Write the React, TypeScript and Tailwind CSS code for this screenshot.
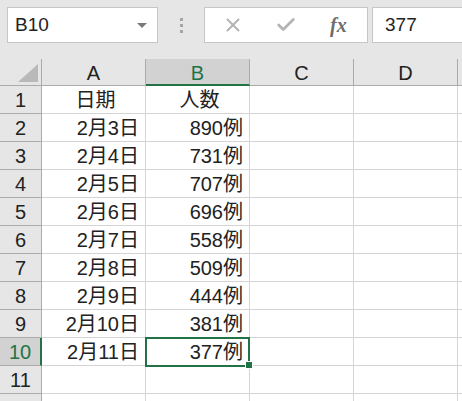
import { Check, X } from "lucide-react";

const rows: [string, string][] = [
  ["日期", "人数"],
  ["2月3日", "890例"],
  ["2月4日", "731例"],
  ["2月5日", "707例"],
  ["2月6日", "696例"],
  ["2月7日", "558例"],
  ["2月8日", "509例"],
  ["2月9日", "444例"],
  ["2月10日", "381例"],
  ["2月11日", "377例"],
  ["", ""],
  ["", ""],
];

const cols = ["A", "B", "C", "D", ""];
const font = { fontFamily: '"Liberation Sans", "Noto Sans CJK JP", sans-serif' };

export default function App() {
  return (
    <div className="h-[401px] w-[462px] overflow-hidden bg-[#e6e6e6] text-[#222]" style={font}>
      {/* formula bar */}
      <div className="flex h-[59px] items-start pt-[7px]">
        <div className="ml-[7px] flex h-[36px] w-[151px] items-center justify-between border border-[#c6c6c6] bg-white pl-[7px] pr-[10px] text-[19px]">
          <span>B10</span>
          <span className="h-0 w-0 border-x-[5px] border-t-[5px] border-x-transparent border-t-[#7a7a7a]" />
        </div>
        <div className="flex h-[36px] w-[46px] flex-col items-center justify-center gap-[3px]">
          <span className="h-[3px] w-[3px] bg-[#a6a6a6]" />
          <span className="h-[3px] w-[3px] bg-[#a6a6a6]" />
          <span className="h-[3px] w-[3px] bg-[#a6a6a6]" />
        </div>
        <div className="flex h-[36px] w-[164px] items-center border border-[#c6c6c6] bg-white">
          <X className="ml-[17px] h-[22px] w-[22px] text-[#b4b4b4]" strokeWidth={2.2} />
          <Check className="ml-[31px] h-[22px] w-[22px] text-[#b4b4b4]" strokeWidth={3} />
          <span
            className="ml-[33px] text-[20px] font-bold italic text-[#6d6d6d]"
            style={{ fontFamily: '"Liberation Serif", serif' }}
          >
            fx
          </span>
        </div>
        <div className="ml-[4px] flex h-[36px] flex-1 items-center border border-r-0 border-[#c6c6c6] bg-white pl-[12px] text-[19px]">
          377
        </div>
      </div>

      {/* sheet */}
      <div className="grid grid-cols-[42px_104px_104px_104px_104px_104px] grid-rows-[27px_repeat(12,28px)]">
        <div className="relative border-r border-b border-[#ababab]">
          <span
            className="absolute right-[3px] bottom-[3px] h-[18px] w-[20px] bg-[#b9b9b9]"
            style={{ clipPath: "polygon(100% 0, 100% 100%, 0 100%)" }}
          />
        </div>
        {cols.map((c, i) => (
          <div
            key={i}
            className={
              c === "B"
                ? "flex items-center justify-center border-r border-b-2 border-r-[#ababab] border-b-[#217346] bg-[#d2d2d2] pt-[2px] text-[20px] text-[#217346]"
                : "flex items-center justify-center border-r border-b border-[#ababab] pt-[1px] text-[20px]"
            }
          >
            {c}
          </div>
        ))}

        {rows.map(([a, b], i) => {
          const n = i + 1;
          const sel = n === 10;
          const align = n === 1 ? "justify-center pl-[4px]" : "justify-end pr-[6px]";
          return [
            <div
              key={`h${n}`}
              className={
                sel
                  ? "flex items-center justify-center border-r-2 border-b border-r-[#217346] border-b-[#ababab] bg-[#d2d2d2] text-[20px] text-[#217346]"
                  : "flex items-center justify-center border-r border-b border-[#ababab] text-[20px]"
              }
            >
              {n < 12 ? n : ""}
            </div>,
            <div
              key={`a${n}`}
              className={`flex items-center border-r border-b border-[#d4d4d4] bg-white text-[20px] ${align}`}
            >
              {a}
            </div>,
            <div
              key={`b${n}`}
              className={`flex items-center border-r border-b border-[#d4d4d4] bg-white text-[20px] ${align} ${
                sel ? "relative z-10" : ""
              }`}
            >
              {b}
              {sel && (
                <>
                  <span className="pointer-events-none absolute -top-[1px] -left-[1px] h-[30px] w-[105px] border-2 border-[#217346]" />
                  <span className="absolute -right-[4px] -bottom-[4px] h-[8px] w-[8px] border border-white bg-[#217346]" />
                </>
              )}
            </div>,
            <div key={`c${n}`} className="border-r border-b border-[#d4d4d4] bg-white" />,
            <div key={`d${n}`} className="border-r border-b border-[#d4d4d4] bg-white" />,
            <div key={`e${n}`} className="border-r border-b border-[#d4d4d4] bg-white" />,
          ];
        })}
      </div>
    </div>
  );
}
